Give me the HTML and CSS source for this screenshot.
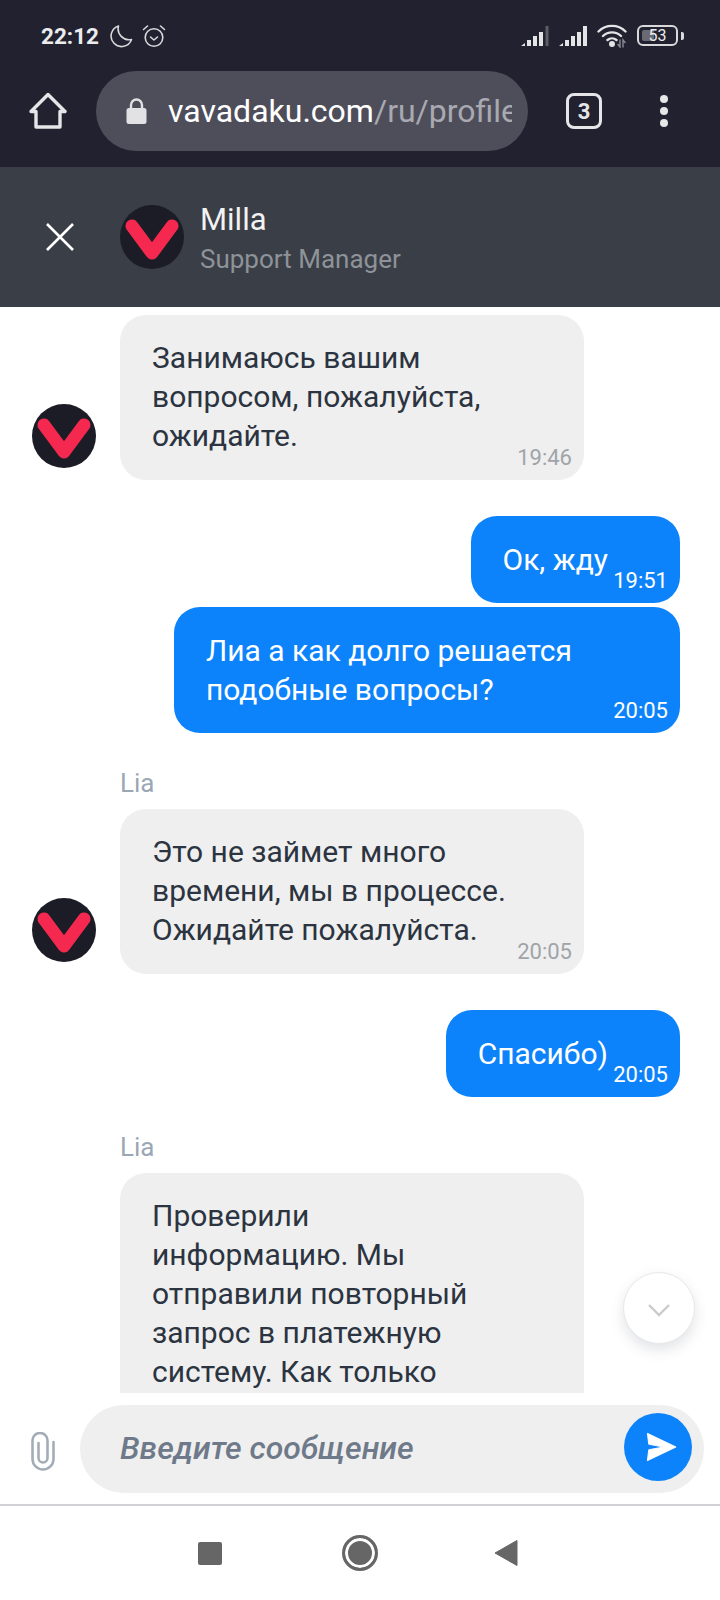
FILE: index.html
```html
<!DOCTYPE html>
<html lang="ru">
<head>
    <meta charset="UTF-8">
    <title>vavadaku.com</title>
    <link rel="stylesheet" href="styles.css">
</head>
<body>
<div class="topbar">
    <div class="status">
        <span class="clock">22:12</span>
        <svg class="moon" width="24" height="24" viewBox="0 0 24 24"><path d="M9.500 2A10.500 10.500 0 1 0 22.500 15.500 A11 11 0 0 1 9.500 2Z" fill="none" stroke="#d9d9dc" stroke-width="1.600" stroke-linejoin="round"/></svg>
        <svg class="alarm" width="24" height="24" viewBox="0 0 24 24" fill="none" stroke="#d9d9dc" stroke-width="1.600" stroke-linecap="round" stroke-linejoin="round"><circle cx="12" cy="13.500" r="8.800"/><path d="M8.500 13l3.500 3 3.500-3M1.500 5.500L5.500 2M22.500 5.500L18.500 2"/></svg>
        <span class="status-right">
            <svg width="28" height="20" viewBox="0 0 28 20" fill="#e4e4e6"><path d="M0 20l4-3v3zM6 14h4v6H6zM12 10h4v10h-4zM18 6h4v14h-4z"/><path d="M24.500 0h3v20h-3z" fill="#5d5d68"/></svg>
            <svg width="28" height="20" viewBox="0 0 28 20" fill="#e4e4e6"><path d="M0 20l4-3v3zM6 14h4v6H6zM12 10h4v10h-4zM18 6h4v14h-4zM24 0h4v20h-4z"/></svg>
            <svg width="30" height="24" viewBox="0 0 30 24" fill="none" stroke="#e4e4e6" stroke-width="2.400" stroke-linecap="round"><path d="M1.500 7.500a19 19 0 0 1 27 0M6 12a13 13 0 0 1 18 0M10.500 16a7 7 0 0 1 9 0"/><circle cx="15" cy="20" r="1.800" fill="#e4e4e6"/><path d="M23 16v7l-2-2.500M26 23v-7l2 2.500" stroke="#8a8a94" stroke-width="1.400"/></svg>
            <span class="battery"><span class="battery-level"></span><span class="battery-num">53</span></span>
            <span class="battery-tip"></span>
        </span>
    </div>
    <div class="browser">
        <svg class="home" width="38" height="38" viewBox="0 0 38 38" fill="none" stroke="#e6e6e8" stroke-width="3.400" stroke-linejoin="round"><path d="M2 19.500L19 2.500l17 17h-5V35H7V19.500z"/></svg>
        <div class="urlbar">
            <svg width="21" height="26" viewBox="0 0 21 26"><path d="M5 11V7a5.500 5.500 0 0 1 11 0v4" fill="none" stroke="#e2e2e4" stroke-width="2.400"/><rect x="0.500" y="10" width="20" height="16" rx="2.500" fill="#e2e2e4"/></svg>
            <div class="url"><span class="url-host">vavadaku.com</span>/ru/profile</div>
        </div>
        <div class="tabs">3</div>
        <div class="dots"><i></i><i></i><i></i></div>
    </div>
</div>

<div class="chat-head">
    <svg class="close" width="30" height="30" viewBox="0 0 30 30"><path d="M2 2l26 26M28 2L2 28" stroke="#fff" stroke-width="2.600"/></svg>
    <svg class="logo" width="64" height="64" viewBox="0 0 64 64"><circle cx="32" cy="32" r="32" fill="#1b1c25"/><path d="M12 21l20 27 20-27" fill="none" stroke="#f5294f" stroke-width="13" stroke-linecap="round" stroke-linejoin="round"/></svg>
    <div class="head-text">
        <div class="agent">Milla</div>
        <div class="role">Support Manager</div>
    </div>
</div>

<div class="messages">
    <div class="row first">
        <svg class="logo" width="64" height="64" viewBox="0 0 64 64"><circle cx="32" cy="32" r="32" fill="#1b1c25"/><path d="M12 21l20 27 20-27" fill="none" stroke="#f5294f" stroke-width="13" stroke-linecap="round" stroke-linejoin="round"/></svg>
        <div class="bubble in">Занимаюсь вашим вопросом, пожалуйста, ожидайте.<span class="time">19:46</span></div>
    </div>
    <div class="bubble out gap-big">Ок, жду<span class="time">19:51</span></div>
    <div class="bubble out gap-small">Лиа а как долго решается подобные вопросы?<span class="time">20:05</span></div>
    <div class="sender">Lia</div>
    <div class="row">
        <svg class="logo" width="64" height="64" viewBox="0 0 64 64"><circle cx="32" cy="32" r="32" fill="#1b1c25"/><path d="M12 21l20 27 20-27" fill="none" stroke="#f5294f" stroke-width="13" stroke-linecap="round" stroke-linejoin="round"/></svg>
        <div class="bubble in">Это не займет много времени, мы в процессе. Ожидайте пожалуйста.<span class="time">20:05</span></div>
    </div>
    <div class="bubble out gap-big">Спасибо)<span class="time">20:05</span></div>
    <div class="sender">Lia</div>
    <div class="row">
        <div class="logo-space"></div>
        <div class="bubble in">Проверили<br>информацию. Мы отправили повторный запрос в платежную систему. Как только</div>
    </div>
    <button class="scroll-down"><svg width="24" height="14" viewBox="0 0 24 14"><path d="M2 2l10 10L22 2" fill="none" stroke="#c9cbcd" stroke-width="2.400"/></svg></button>
</div>

<div class="composer">
    <svg class="clip" width="24" height="40" viewBox="0 0 24 40" fill="none" stroke="#a3adb8" stroke-width="2.600" stroke-linecap="round"><path d="M7.500 11V26a4.500 4.500 0 0 0 9 0V8.500a7.500 7.500 0 0 0-15 0V27a10.500 10.500 0 0 0 21 0V10"/></svg>
    <div class="field">
        <span class="placeholder">Введите сообщение</span>
        <div class="send"><svg width="31" height="30" viewBox="0 0 34 32"><path d="M1.500 1L33 16 1.500 31 3 19l16-3-16-3z" fill="#fff" stroke="#fff" stroke-width="1" stroke-linejoin="round"/></svg></div>
    </div>
</div>

<div class="navbar">
    <span class="nav-square"></span>
    <span class="nav-circle"></span>
    <svg width="24" height="26" viewBox="0 0 24 26"><path d="M23 0.500v25L1 13z" fill="#666" stroke="#666" stroke-width="1" stroke-linejoin="round"/></svg>
</div>
</body>
</html>
```

FILE: styles.css
```css
* {
    box-sizing: border-box;
}

body {
    margin: 0;
    width: 720px;
    height: 1600px;
    display: flex;
    flex-direction: column;
    overflow: hidden;
    background: #fff;
    font-family: Roboto, "Noto Sans", sans-serif;
}

/* status + browser */
.topbar {
    height: 167px;
    background: #21212f;
    color: #fff;
}

.status {
    height: 71px;
    padding: 0 41px 0 41px;
    display: flex;
    align-items: center;
}

.clock {
    width: 57px;
    font-size: 22.500px;
    font-weight: 700;
    color: #ececee;
}

.moon {
    margin-left: 11px;
}

.alarm {
    margin-left: 9px;
}

.status-right {
    margin-left: auto;
    display: flex;
    align-items: center;
    gap: 10px;
}

.battery {
    width: 41px;
    height: 21px;
    border: 2px solid #d9d9dc;
    border-radius: 6px;
    display: flex;
    align-items: center;
    justify-content: center;
    position: relative;
    margin-right: -7px;
}

.battery-level {
    position: absolute;
    left: 3px;
    top: 3px;
    bottom: 3px;
    width: 12px;
    background: #6a6a74;
    border-radius: 2px;
}

.battery-num {
    position: relative;
    font-size: 16px;
    color: #ececee;
}

.battery-tip {
    width: 3px;
    height: 8px;
    margin-right: -5px;
    background: #d9d9dc;
    border-radius: 0 2px 2px 0;
}

.browser {
    height: 80px;
    padding-left: 29px;
    display: flex;
    align-items: center;
}

.urlbar {
    width: 432px;
    height: 80px;
    margin-left: 29px;
    padding: 0 16px 0 30px;
    border-radius: 40px;
    background: #4e4e5b;
    display: flex;
    align-items: center;
    gap: 21px;
}

.url {
    flex: 1;
    overflow: hidden;
    white-space: nowrap;
    font-size: 32px;
    color: #a9a9b1;
}

.url-host {
    color: #fff;
}

.tabs {
    width: 36px;
    height: 36px;
    margin-left: 38px;
    border: 3.500px solid #e6e6e8;
    border-radius: 8px;
    display: flex;
    align-items: center;
    justify-content: center;
    font-size: 22px;
    font-weight: 700;
    color: #e6e6e8;
}

.dots {
    margin-left: 58px;
    display: flex;
    flex-direction: column;
    gap: 4px;
}

.dots i {
    width: 8px;
    height: 8px;
    border-radius: 50%;
    background: #e6e6e8;
}

/* chat header */
.chat-head {
    height: 140px;
    padding-left: 45px;
    background: #3a3e46;
    display: flex;
    align-items: center;
}

.close {
    margin-right: 45px;
}

.logo {
    flex-shrink: 0;
}

.head-text {
    padding-top: 3px;
}

.agent {
    margin: 0 0 8px 16px;
    font-size: 31px;
    line-height: 32px;
    color: #f2f2f3;
}

.role {
    margin-left: 16px;
    font-size: 26px;
    line-height: 30px;
    color: #8e9299;
}

/* messages */
.messages {
    height: 1086px;
    padding: 0 40px 0 32px;
    position: relative;
    overflow: hidden;
    display: flex;
    flex-direction: column;
}

.row {
    flex-shrink: 0;
    display: flex;
    align-items: flex-end;
    gap: 24px;
}

.row .logo {
    margin-bottom: 12px;
}

.row.first {
    margin-top: 8px;
}

.logo-space {
    width: 64px;
    flex-shrink: 0;
}

.bubble {
    position: relative;
    flex-shrink: 0;
    font-size: 30px;
    line-height: 39px;
    border-radius: 26px;
}

.bubble.in {
    width: 464px;
    padding: 23px 32px 25px;
    background: #efefef;
    color: #2b3440;
}

.bubble.out {
    align-self: flex-end;
    max-width: 506px;
    padding: 24px 72px 24px 32px;
    background: #0d83fb;
    color: #fff;
}

.gap-big {
    margin-top: 36px;
}

.gap-small {
    margin-top: 4px;
}

.time {
    position: absolute;
    right: 12px;
    bottom: 9px;
    font-size: 22px;
    line-height: 26px;
}

.in .time {
    color: #9fa4a9;
}

.sender {
    flex-shrink: 0;
    margin: 38px 0 0 88px;
    padding-bottom: 14px;
    font-size: 26px;
    line-height: 24px;
    color: #9ba7b4;
}

.scroll-down {
    position: absolute;
    left: 623px;
    top: 965px;
    width: 72px;
    height: 72px;
    padding: 6px 0 0;
    border: 1px solid #e6e8ea;
    border-radius: 50%;
    background: #fff;
    box-shadow: 0 6px 14px rgba(60, 70, 90, 0.15);
}

/* input */
.composer {
    height: 113px;
    padding: 12px 16px 11px 0;
    border-bottom: 2px solid #cfd1d4;
    display: flex;
    align-items: center;
}

.clip {
    margin: 6px 25px 0 31px;
    flex-shrink: 0;
}

.field {
    flex: 1;
    height: 88px;
    padding: 0 12px 0 40px;
    border-radius: 44px;
    background: #efefef;
    display: flex;
    align-items: center;
    justify-content: space-between;
}

.placeholder {
    margin-bottom: 2px;
    font-size: 32px;
    font-weight: 500;
    font-style: italic;
    color: #6e7a89;
}

.send {
    width: 68px;
    height: 68px;
    padding-left: 7px;
    margin-bottom: 5px;
    border-radius: 50%;
    background: #0d83fb;
    display: flex;
    align-items: center;
    justify-content: center;
}

/* android nav */
.navbar {
    flex: 1;
    padding: 0 202px 0 198px;
    display: flex;
    align-items: center;
    justify-content: space-between;
}

.nav-square {
    width: 24px;
    height: 23px;
    border-radius: 2px;
    background: #666;
}

.nav-circle {
    width: 36px;
    height: 36px;
    margin-left: 4px;
    border: 3px solid #666;
    border-radius: 50%;
    background: #666;
    box-shadow: inset 0 0 0 3px #fff;
}
```
